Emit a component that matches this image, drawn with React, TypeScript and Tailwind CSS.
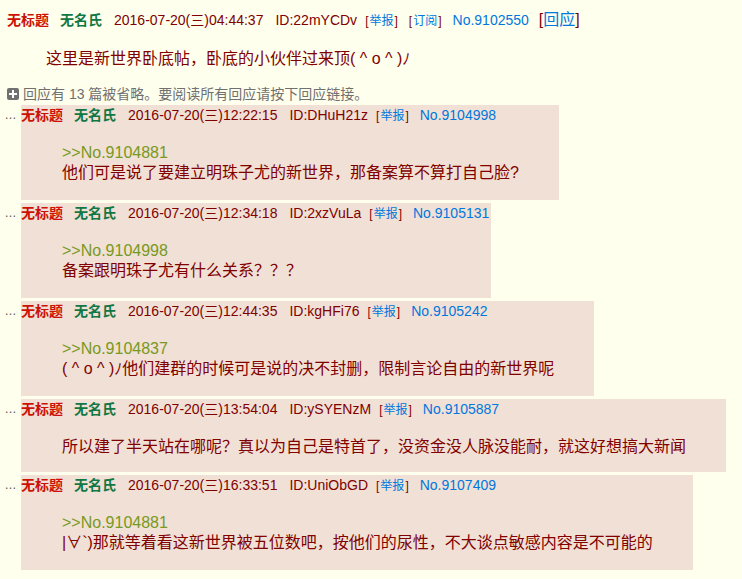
import React from "react";

type Reply = {
  id: string;
  time: string;
  no: string;
  quote?: string;
  text: string;
};

const replies: Reply[] = [
  { id: "DHuH21z", time: "12:22:15", no: "9104998", quote: "9104881", text: "他们可是说了要建立明珠子尤的新世界，那备案算不算打自己脸?" },
  { id: "2xzVuLa", time: "12:34:18", no: "9105131", quote: "9104998", text: "备案跟明珠子尤有什么关系？？？" },
  { id: "kgHFi76", time: "12:44:35", no: "9105242", quote: "9104837", text: "( ^ o ^ )ﾉ他们建群的时候可是说的决不封删，限制言论自由的新世界呢" },
  { id: "ySYENzM", time: "13:54:04", no: "9105887", text: "所以建了半天站在哪呢？真以为自己是特首了，没资金没人脉没能耐，就这好想搞大新闻" },
  { id: "UniObGD", time: "16:33:51", no: "9107409", quote: "9104881", text: "|∀`)那就等着看这新世界被五位数吧，按他们的尿性，不大谈点敏感内容是不可能的" },
];

function Bracket({ label }: { label: string }) {
  return (
    <span className="text-[12px] text-[#800000]">
      [<span className="px-[1px] text-[#0077dd]">{label}</span>]
    </span>
  );
}

function Header({ date, id, no, main }: { date: string; id: string; no: string; main?: boolean }) {
  return (
    <div className="flex h-[20px] items-center whitespace-nowrap pr-[2px] text-[14px]">
      <span className="font-bold text-[#cc1105]">无标题</span>
      <span className="ml-[11px] font-bold text-[#117743]">无名氏</span>
      <span className="ml-[12px] text-[#800000]">{date}</span>
      <span className="ml-[12px] text-[#800000]">ID:{id}</span>
      <span className="ml-[8px]">
        <Bracket label="举报" />
      </span>
      {main && (
        <span className="ml-[11px]">
          <Bracket label="订阅" />
        </span>
      )}
      <span className="ml-[11px] text-[#0077dd]">No.{no}</span>
      {main && (
        <span className="ml-[10px] text-[16px] text-[#800000]">
          [<span className="text-[#0077dd]">回应</span>]
        </span>
      )}
    </div>
  );
}

export default function App() {
  return (
    <div
      className="min-h-screen bg-[#ffffee] pt-[10px] text-[#800000]"
      style={{ fontFamily: '"Liberation Sans", "Noto Sans CJK SC", sans-serif' }}
    >
      <div className="pl-[7px]">
        <Header date="2016-07-20(三)04:44:37" id="22mYCDv" no="9102550" main />
      </div>
      <div className="mt-[19px] pl-[46px] text-[16px] leading-[20px]">
        这里是新世界卧底帖，卧底的小伙伴过来顶( ^ o ^ )ﾉ
      </div>
      <div className="mt-[15px] flex h-[20px] items-center pl-[7px] text-[14px] text-[#707070]">
        <span className="relative mr-[4px] inline-block h-[12px] w-[12px] rounded-[2px] bg-[#707070]">
          <span className="absolute left-[5px] top-[2px] h-[8px] w-[2px] bg-white" />
          <span className="absolute left-[2px] top-[5px] h-[2px] w-[8px] bg-white" />
        </span>
        回应有 13 篇被省略。要阅读所有回应请按下回应链接。
      </div>
      <div className="mt-[1px] flex flex-col gap-[3px]">
        {replies.map((r) => (
          <div key={r.no} className="flex items-start">
            <div className="flex h-[20px] w-[21px] shrink-0 items-center justify-center text-[12px] text-[#555]">…</div>
            <div className={"bg-[#f0e0d6] " + (r.quote ? "pb-[17px]" : "pb-[15px]")}>
              <Header date={"2016-07-20(三)" + r.time} id={r.id} no={r.no} />
              <div className="mt-[18px] pl-[41px] pr-[40px] text-[16px] leading-[20px] whitespace-nowrap">
                {r.quote && <div className="text-[#789922]">&gt;&gt;No.{r.quote}</div>}
                <div>{r.text}</div>
              </div>
            </div>
          </div>
        ))}
      </div>
    </div>
  );
}
